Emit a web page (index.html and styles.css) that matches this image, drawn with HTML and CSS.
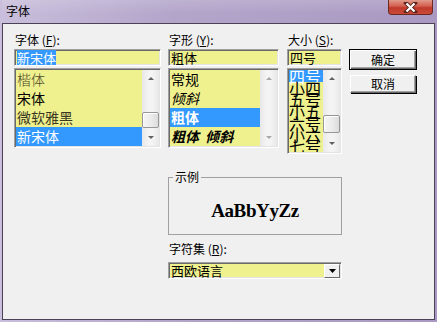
FILE: index.html
```html
<!DOCTYPE html>
<html lang="zh-CN">
<head>
<meta charset="utf-8">
<title>字体</title>
<link rel="stylesheet" href="styles.css">
</head>
<body>
<div class="window">
  <div class="titlebar">
    <span class="title">字体</span>
    <span class="close"><svg width="15" height="11" viewBox="0 0 15 11"><path d="M3 1 L12 10 M12 1 L3 10" stroke="#5a2420" stroke-width="4" stroke-linecap="square"/><path d="M3.5 1.5 L11.5 9.5 M11.5 1.5 L3.5 9.5" stroke="#fff" stroke-width="2.2"/></svg></span>
  </div>
  <div class="client">
    <div class="toprow">
      <div class="col col-face">
        <div class="label">字体 (<u>F</u>):</div>
        <div class="field"><span class="sel">新宋体</span></div>
        <div class="list">
          <div class="items">
            <div class="item kai">楷体</div>
            <div class="item">宋体</div>
            <div class="item yahei">微软雅黑</div>
            <div class="item on">新宋体</div>
          </div>
          <div class="sbar">
            <span class="arr up"></span>
            <span class="track"><span class="thumb thumb1"></span></span>
            <span class="arr down"></span>
          </div>
        </div>
      </div>
      <div class="col col-style">
        <div class="label">字形 (<u>Y</u>):</div>
        <div class="field">粗体</div>
        <div class="list">
          <div class="items">
            <div class="item">常规</div>
            <div class="item ital">倾斜</div>
            <div class="item on bold">粗体</div>
            <div class="item bold ital">粗体&nbsp;&nbsp;倾斜</div>
          </div>
          <div class="sbar">
            <span class="arr up dis"></span>
            <span class="track"></span>
            <span class="arr down dis"></span>
          </div>
        </div>
      </div>
      <div class="col col-size">
        <div class="label">大小 (<u>S</u>):</div>
        <div class="field">四号</div>
        <div class="list list-size">
          <div class="items items-size">
            <div class="sitem on">四号</div>
            <div class="sitem">小四</div>
            <div class="sitem">五号</div>
            <div class="sitem">小五</div>
            <div class="sitem">六号</div>
            <div class="sitem">小六</div>
            <div class="sitem">七号</div>
          </div>
          <div class="sbar">
            <span class="arr up"></span>
            <span class="track"><span class="thumb thumb3"></span></span>
            <span class="arr down"></span>
          </div>
        </div>
      </div>
      <div class="col col-btns">
        <button class="btn default">确定</button>
        <button class="btn">取消</button>
      </div>
    </div>
    <div class="bottom">
      <fieldset class="group">
        <legend>示例</legend>
        <div class="sample">AaBbYyZz</div>
      </fieldset>
      <div class="label cs-label">字符集 (<u>R</u>):</div>
      <div class="field combo"><span class="cval">西欧语言</span><span class="dd"><svg width="7" height="4" viewBox="0 0 7 4"><path d="M0 0 H7 L3.5 4 Z" fill="#000"/></svg></span></div>
    </div>
  </div>
</div>
</body>
</html>
```
FILE: styles.css
```css
html, body {
  margin: 0;
  padding: 0;
}
body {
  width: 437px;
  height: 322px;
  overflow: hidden;
  font-family: "Noto Sans CJK SC", "Liberation Sans", sans-serif;
  color: #000;
}
.window {
  width: 437px;
  height: 322px;
  box-sizing: border-box;
  padding: 0 2px 2px 2px;
  display: flex;
  flex-direction: column;
  background: linear-gradient(90deg, #c9bedb 0%, #b3a5ca 40%, #a999c2 100%);
}
.titlebar {
  height: 23px;
  flex: none;
  display: flex;
  justify-content: space-between;
  align-items: flex-start;
  background: linear-gradient(180deg, rgba(255,255,255,0.15), rgba(255,255,255,0) 60%);
}
.title {
  font-size: 12px;
  line-height: 16px;
  margin: 3px 0 0 4px;
}
.close {
  width: 43px;
  height: 14px;
  margin-right: 2px;
  border: 1px solid #6a2a22;
  border-top: none;
  border-radius: 0 0 4px 4px;
  background: linear-gradient(180deg, #e09a8c 0%, #d25c4c 45%, #c0392b 55%, #c94a38 100%);
  display: flex;
  align-items: center;
  justify-content: center;
}
.client {
  flex: 1;
  border: 1px solid #4b4257;
  background: #f0f0f0;
  padding: 8px 0 0 11px;
  display: flex;
  flex-direction: column;
}
.toprow {
  display: flex;
  align-items: flex-start;
}
.col {
  display: flex;
  flex-direction: column;
}
.col-face { width: 147px; }
.col-style { width: 111px; margin-left: 7px; }
.col-size { width: 55px; margin-left: 8px; }
.col-btns { width: 68px; margin-left: 7px; padding-top: 17px; align-items: flex-start; }
.label {
  font-size: 12px;
  line-height: 15px;
  height: 17px;
  padding-left: 1px;
  white-space: nowrap;
}
.label u { text-decoration: underline; }
.field {
  box-sizing: border-box;
  height: 17px;
  border: 1px solid;
  border-color: #a0a0a0 #ffffff #ffffff #a0a0a0;
  box-shadow: inset 1px 1px 0 #696969, inset -1px -1px 0 #e3e3e3;
  background: #eff08e;
  font-size: 13px;
  line-height: 14px;
  padding: 1px 0 0 2px;
  white-space: nowrap;
  overflow: hidden;
}
.sel {
  background: #3399ff;
  color: #fff;
}
.list {
  box-sizing: border-box;
  height: 80px;
  margin-top: 2px;
  border: 1px solid;
  border-color: #a0a0a0 #ffffff #ffffff #a0a0a0;
  box-shadow: inset 1px 1px 0 #696969, inset -1px -1px 0 #e3e3e3;
  padding: 1px;
  display: flex;
  background: #eff08e;
}
.list-size { height: 86px; }
.items {
  flex: 1;
  overflow: hidden;
}
.item {
  height: 19px;
  font-size: 14px;
  line-height: 19px;
  padding-left: 1px;
  white-space: nowrap;
}
.kai { color: #4d4a2a; font-weight: 300; }
.yahei { color: #3a3822; }
.ital { font-style: italic; }
.bold { font-weight: 700; }
.on {
  background: #3399ff;
  color: #fff;
}
.items-size { overflow: hidden; }
.sitem {
  height: 11.7px;
  font-size: 16px;
  line-height: 12px;
  white-space: nowrap;
}
.sbar {
  width: 17px;
  flex: none;
  display: flex;
  flex-direction: column;
  background: linear-gradient(90deg, #e8e8e8, #f4f4f4 40%, #f4f4f4 60%, #e8e8e8);
}
.arr {
  height: 17px;
  flex: none;
  display: flex;
  align-items: center;
  justify-content: center;
}
.arr::before {
  content: "";
  width: 0;
  height: 0;
  border-left: 3px solid transparent;
  border-right: 3px solid transparent;
}
.up::before { border-bottom: 3px solid #606060; }
.down::before { border-top: 3px solid #606060; }
.dis.up::before { border-bottom-color: #a8a8a8; }
.dis.down::before { border-top-color: #a8a8a8; }
.track {
  flex: 1;
  display: flex;
  flex-direction: column;
  justify-content: flex-end;
}
.thumb {
  box-sizing: border-box;
  border: 1px solid #979797;
  border-radius: 2px;
  background: linear-gradient(90deg, #f5f5f5, #ececec 50%, #dcdcdc);
  box-shadow: inset 1px 1px 0 #fff;
}
.thumb1 { height: 16px; margin-bottom: 1px; }
.thumb3 { height: 18px; margin-bottom: 2px; }
.btn {
  box-sizing: border-box;
  width: 66px;
  height: 18px;
  margin: 0 0 0 1px;
  padding: 0;
  font-family: "Noto Sans CJK SC", sans-serif;
  font-size: 12px;
  line-height: 14px;
  color: #000;
  background: #f0f0f0;
  border: 1px solid;
  border-color: #ffffff #696969 #696969 #ffffff;
  box-shadow: inset -1px -1px 0 #a0a0a0, 1px 1px 0 #000;
}
.btn.default {
  width: 68px;
  height: 21px;
  margin: 0 0 5px 0;
  border: 1px solid #000;
  box-shadow: inset 1px 1px 0 #fff, inset -1px -1px 0 #696969, inset -2px -2px 0 #a0a0a0;
}
.bottom {
  margin: 16px 0 0 154px;
  width: 174px;
  display: flex;
  flex-direction: column;
}
.group {
  margin: 0;
  padding: 0;
  border: 1px solid #a0a0a0;
  min-width: 0;
}
.group legend {
  font-size: 12px;
  line-height: 14px;
  padding: 0 2px;
  margin-left: 4px;
}
.sample {
  height: 50px;
  display: flex;
  align-items: center;
  justify-content: center;
  font-family: "Liberation Serif", "DejaVu Serif", serif;
  font-weight: 700;
  font-size: 19px;
  letter-spacing: -0.4px;
  padding-top: 3px;
  box-sizing: border-box;
}
.cs-label {
  margin-top: 6px;
  height: 21px;
}
.combo {
  display: flex;
  justify-content: space-between;
  padding: 1px 1px 0 2px;
}
.cval { font-size: 13px; line-height: 14px; }
.dd {
  box-sizing: border-box;
  width: 16px;
  height: 14px;
  background: #f0f0f0;
  border: 1px solid;
  border-color: #ffffff #696969 #696969 #ffffff;
  display: flex;
  align-items: center;
  justify-content: center;
}
```
